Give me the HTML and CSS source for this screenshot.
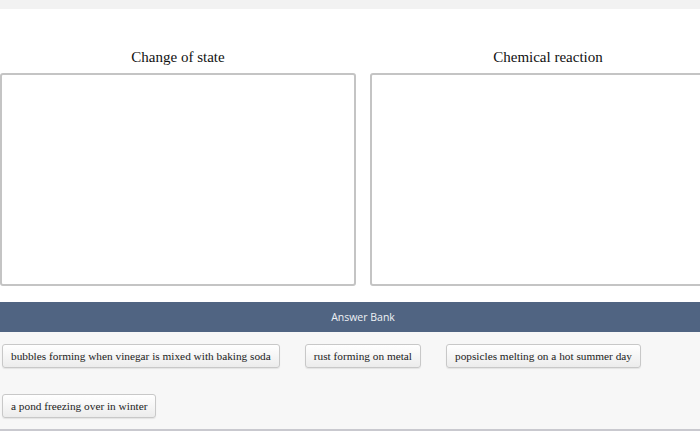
FILE: index.html
```html
<!DOCTYPE html>
<html>
<head>
<meta charset="utf-8">
<link rel="stylesheet" href="styles.css">
</head>
<body>
<div class="topband"></div>
<div class="columns">
  <div class="column">
    <div class="heading">Change of state</div>
    <div class="dropbox"></div>
  </div>
  <div class="column">
    <div class="heading">Chemical reaction</div>
    <div class="dropbox"></div>
  </div>
</div>
<div class="bank">
  <div class="bank-title">Answer Bank</div>
  <div class="bank-items">
    <div class="chip">bubbles forming when vinegar is mixed with baking soda</div>
    <div class="chip">rust forming on metal</div>
    <div class="chip">popsicles melting on a hot summer day</div>
    <div class="chip">a pond freezing over in winter</div>
  </div>
</div>
</body>
</html>
```
FILE: styles.css
```css
html, body {
  margin: 0;
  padding: 0;
  background: #ffffff;
  overflow: hidden;
  width: 700px;
  height: 434px;
}
.topband {
  height: 9px;
  background: #f2f2f2;
}
.columns {
  display: grid;
  grid-template-columns: 356px 356px;
  column-gap: 14px;
  padding-top: 38px;
}
.heading {
  font-family: "Liberation Serif", serif;
  font-size: 15px;
  line-height: 20px;
  color: #111;
  text-align: center;
  margin-bottom: 6px;
}
.dropbox {
  height: 209px;
  border: 2px solid #c4c4c4;
  border-radius: 3px;
  background: #fff;
}
.bank {
  margin-top: 16px;
  background: #f7f7f7;
  border-bottom: 2px solid #c9c9cf;
}
.bank-title {
  height: 30px;
  background: #506482;
  color: #eef1f5;
  font-family: "Open Sans", sans-serif;
  font-size: 10.5px;
  line-height: 30px;
  text-align: center;
  padding-left: 26px;
}
.bank-items {
  display: flex;
  flex-wrap: wrap;
  column-gap: 25px;
  row-gap: 26px;
  padding: 12px 0 11px 2px;
}
.chip {
  height: 22px;
  line-height: 22px;
  padding: 0 8px;
  border: 1px solid #c8c8c8;
  border-radius: 3px;
  background: linear-gradient(#ffffff, #ececec);
  box-shadow: 0 1px 1px rgba(0,0,0,0.08);
  font-family: "Liberation Serif", serif;
  font-size: 11.3px;
  color: #222;
  white-space: nowrap;
}
```
